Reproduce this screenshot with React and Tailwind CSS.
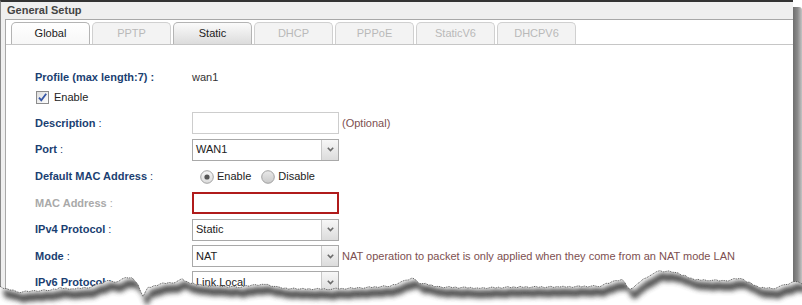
import React from 'react';

const tabs = [
  { label: 'Global', kind: 'active' },
  { label: 'PPTP', kind: 'disabled' },
  { label: 'Static', kind: 'normal' },
  { label: 'DHCP', kind: 'disabled' },
  { label: 'PPPoE', kind: 'disabled' },
  { label: 'StaticV6', kind: 'disabled' },
  { label: 'DHCPV6', kind: 'disabled' },
];

const tabClass = {
  active: 'bg-linear-to-b from-white to-[#f7f7f7] border-[#b4b4b4] text-[#222]',
  normal: 'bg-linear-to-b from-[#fbfbfb] to-[#dcdcdc] border-[#b4b4b4] text-[#222]',
  disabled: 'bg-[#f3f3f3] border-[#d0d0d0] text-[#b9b9b9]',
};

// rough outline of the torn bottom edge
const tear = [
  [0, 287], [10, 290], [20, 292], [35, 291], [50, 290], [60, 288], [75, 289], [90, 287],
  [100, 284], [108, 280], [115, 283], [122, 279], [132, 277], [138, 285], [143, 296],
  [148, 288], [160, 284], [175, 282], [182, 279], [190, 283], [200, 285], [215, 286],
  [240, 287], [255, 285], [265, 284], [280, 288], [300, 289], [330, 289], [360, 288],
  [390, 286], [405, 281], [412, 278], [420, 283], [440, 287], [480, 288], [520, 287],
  [560, 287], [600, 286], [615, 281], [622, 279], [630, 290], [640, 282], [650, 275],
  [660, 271], [675, 272], [685, 276], [695, 280], [710, 280], [725, 281], [740, 278],
  [750, 283], [760, 288], [775, 288], [785, 285], [795, 281], [802, 284],
];

function roughLine(dx = 0, dy = 0) {
  const pts = [];
  for (let i = 0; i < tear.length - 1; i++) {
    const [x1, y1] = tear[i];
    const [x2, y2] = tear[i + 1];
    const steps = Math.max(1, Math.round((x2 - x1) / 3));
    for (let s = 0; s < steps; s++) {
      const t = s / steps;
      const j = ((i * 7 + s * 3) % 5) * 0.35 - 0.7;
      pts.push([x1 + (x2 - x1) * t + dx, y1 + (y2 - y1) * t + j + dy]);
    }
  }
  pts.push([802 + dx, 284 + dy]);
  return pts;
}

const toPath = pts => pts.map(([x, y], i) => `${i ? 'L' : 'M'}${x.toFixed(1)},${y.toFixed(1)}`).join(' ');

function TornEdge() {
  const d = toPath(roughLine());
  const below = `${d} L802,305 L0,305 Z`;
  const top = roughLine(3, 2);
  const bottom = roughLine(4, 10).reverse();
  const shadow = toPath(top) + ' ' + bottom.map(([x, y]) => `L${x.toFixed(1)},${y.toFixed(1)}`).join(' ') + ' Z';
  return (
    <svg className="absolute inset-0 pointer-events-none" width="802" height="305" viewBox="0 0 802 305">
      <defs>
        <filter id="blur" x="-5%" y="-50%" width="110%" height="200%">
          <feGaussianBlur stdDeviation="2.4" />
        </filter>
        <clipPath id="belowTear">
          <path d={below} />
        </clipPath>
      </defs>
      <path d={below} fill="#ffffff" />
      <g clipPath="url(#belowTear)">
        <path d={shadow} fill="#3c3c3c" filter="url(#blur)" opacity="0.9" />
      </g>
      <path d={d} fill="none" stroke="#3a3a3a" strokeWidth="0.8" strokeDasharray="1 0.8" />
    </svg>
  );
}

function Label({ children, muted, boldColon }) {
  return (
    <div className={`w-[157px] shrink-0 text-[11px] ${muted ? 'text-[#a9a9a9]' : 'text-[#1b3f72]'}`}>
      <span className="font-bold">{children}</span>
      <span className={boldColon ? 'font-bold' : 'font-normal'}> :</span>
    </div>
  );
}

function Select({ value }) {
  return (
    <div className="w-[147px] h-[22px] border border-[#a9a9a9] flex bg-white">
      <div className="flex-1 pl-[3px] flex items-center text-[11px] text-[#222]">{value}</div>
      <div className="w-[17px] border-l border-[#c9c9c9] bg-linear-to-b from-[#f7f7f7] to-[#dcdcdc] flex items-center justify-center">
        <svg width="7" height="5" viewBox="0 0 7 5">
          <path d="M0.8 0.8 L3.5 3.6 L6.2 0.8" fill="none" stroke="#6b6b6b" strokeWidth="1.6" />
        </svg>
      </div>
    </div>
  );
}

function Radio({ checked }) {
  const id = checked ? 'rg1' : 'rg2';
  return (
    <svg width="14" height="14" viewBox="0 0 14 14">
      <defs>
        <linearGradient id={id} x1="0" y1="0" x2="0" y2="1">
          <stop offset="0" stopColor={checked ? '#f6f6f6' : '#e9e9e9'} />
          <stop offset="1" stopColor={checked ? '#dcdcdc' : '#c9c9c9'} />
        </linearGradient>
      </defs>
      <circle cx="7" cy="7" r="6.3" fill={`url(#${id})`} stroke="#9a9a9a" strokeWidth="0.9" />
      {checked && <circle cx="7" cy="7" r="2.6" fill="#555" />}
    </svg>
  );
}

function Checkbox() {
  return (
    <svg width="13" height="13" viewBox="0 0 13 13">
      <defs>
        <linearGradient id="cbg" x1="0" y1="0" x2="1" y2="1">
          <stop offset="0" stopColor="#dcdcdc" />
          <stop offset="1" stopColor="#ffffff" />
        </linearGradient>
      </defs>
      <rect x="0.5" y="0.5" width="12" height="12" fill="url(#cbg)" stroke="#8c8c8c" />
      <path d="M3 6.6 L5.3 9.4 L10.2 2.8" fill="none" stroke="#3656a6" strokeWidth="1.8" />
    </svg>
  );
}

export default function App() {
  return (
    <div className="relative w-[802px] h-[305px] overflow-hidden bg-white font-['Liberation_Sans',Arial,sans-serif]">
      <div className="flex">
        <div className="w-[793px] h-[305px] border-t-2 border-[#333] border-l border-l-[#8a8a8a] bg-[#efefef]">
          <div className="h-[17px] pl-[6px] flex items-center text-[11px] font-bold text-[#444]">General Setup</div>
          <div className="ml-[4px] h-[290px] border-l border-t border-[#a8a8a8] bg-white">
            <div className="flex gap-[2px] pl-[5px] pt-[2px] border-b border-[#c6c6c6]">
              {tabs.map(t => (
                <div
                  key={t.label}
                  className={`w-[79px] h-[22px] flex items-center justify-center rounded-t-[5px] border border-b-0 text-[11px] ${tabClass[t.kind]}`}
                >
                  {t.label}
                </div>
              ))}
            </div>

            <div className="pl-[29px] text-[11px]">
              <div className="mt-[23px] h-[18px] flex items-center">
                <Label boldColon>Profile (max length:7)</Label>
                <span className="text-[#333]">wan1</span>
              </div>
              <div className="mt-[2px] h-[18px] flex items-center gap-[5px] pl-[1px]">
                <Checkbox />
                <span className="text-[#222]">Enable</span>
              </div>

              <div className="mt-[4px] h-[26px] flex items-center">
                <Label>Description</Label>
                <div className="w-[147px] h-[22px] border border-[#cdcdcd] bg-white" />
                <span className="ml-[3px] text-[#7d4f50]">(Optional)</span>
              </div>
              <div className="h-[27px] flex items-center">
                <Label>Port</Label>
                <Select value="WAN1" />
              </div>
              <div className="h-[27px] flex items-center">
                <Label>Default MAC Address</Label>
                <div className="flex items-center pl-[8px] text-[#222]">
                  <Radio checked />
                  <span className="ml-[3px]">Enable</span>
                  <span className="ml-[10px] flex"><Radio /></span>
                  <span className="ml-[3px]">Disable</span>
                </div>
              </div>
              <div className="h-[26px] flex items-center">
                <Label muted>MAC Address</Label>
                <div className="w-[147px] h-[22px] border-2 border-[#b01b1b] bg-white" />
              </div>
              <div className="h-[27px] flex items-center">
                <Label>IPv4 Protocol</Label>
                <Select value="Static" />
              </div>
              <div className="h-[26px] flex items-center">
                <Label>Mode</Label>
                <Select value="NAT" />
                <span className="ml-[3px] text-[#7d4f50]">NAT operation to packet is only applied when they come from an NAT mode LAN</span>
              </div>
              <div className="h-[26px] flex items-center">
                <Label>IPv6 Protocol</Label>
                <Select value="Link Local" />
              </div>
            </div>
          </div>
        </div>
        <div className="mt-[7px] w-[9px] h-[290px] rounded-tr-[3px] bg-linear-to-r from-[#6e6e6e] via-[#8a8a8a] to-[#c4c4c4]" />
      </div>
      <TornEdge />
    </div>
  );
}
